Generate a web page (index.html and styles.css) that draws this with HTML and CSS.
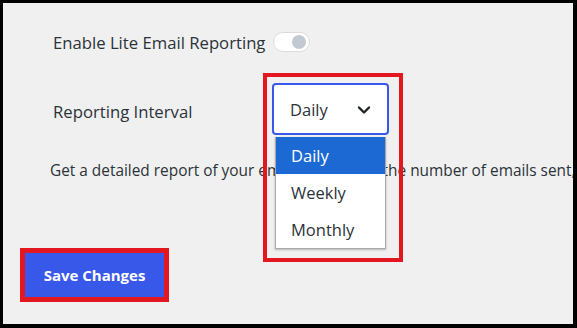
FILE: index.html
```html
<!DOCTYPE html>
<html lang="en">
<head>
    <meta charset="UTF-8">
    <meta name="viewport" content="width=device-width, initial-scale=1.0">
    <title>Email Reporting Settings</title>
    <link rel="stylesheet" href="styles.css">
</head>
<body>
    <div class="frame">
        <!-- Lite reporting toggle -->
        <div class="row-toggle">
            <span class="label-text">Enable Lite Email Reporting</span>
            <span class="toggle"><span class="knob"></span></span>
        </div>

        <!-- Interval select, shown open -->
        <div class="row-interval">
            <span class="interval-label">Reporting Interval</span>
            <div class="select-wrap">
                <div class="select-box">
                    <span>Daily</span>
                    <svg class="chevron" width="14" height="10" viewBox="0 0 14 10">
                        <path d="M2 2.5 L7 7.5 L12 2.5" fill="none" stroke="#1d2327" stroke-width="2.4" stroke-linecap="round" stroke-linejoin="round"/>
                    </svg>
                </div>
                <div class="highlight-box"></div>
                <ul class="options">
                    <li class="selected">Daily</li>
                    <li>Weekly</li>
                    <li>Monthly</li>
                </ul>
            </div>
        </div>

        <p class="description">Get a detailed report of your email usage with the number of emails sent, failed, and opened.</p>

        <div class="save-wrap">
            <button class="save-btn">Save Changes</button>
        </div>
    </div>
</body>
</html>
```

FILE: styles.css
```css
/* Settings panel screenshot */
html, body {
    margin: 0;
    padding: 0;
}

body {
    font-family: "Open Sans", "Noto Sans", sans-serif;
    color: #2c3338;
}

.frame {
    box-sizing: border-box;
    width: 577px;
    height: 328px;
    border: 3px solid #000;
    border-right-width: 4px;
    border-bottom-width: 4px;
    background-color: #f0f0f1;
    overflow: hidden;
}

.row-toggle {
    display: flex;
    align-items: center;
    gap: 8px;
    height: 20px;
    margin: 29px 0 0 50px;
    font-size: 16.7px;
}

.toggle {
    position: relative;
    box-sizing: border-box;
    width: 37px;
    height: 20px;
    background-color: #fff;
    border: 1px solid #dcdcde;
    border-radius: 10px;
}

.knob {
    position: absolute;
    top: 2px;
    right: 3px;
    width: 14px;
    height: 14px;
    border-radius: 50%;
    background-color: #c3c9d3;
}

.row-interval {
    display: flex;
    align-items: center;
    margin: 31px 0 0 50px;
    font-size: 16.7px;
}

.interval-label {
    width: 219px;
    margin-top: 4px;
}

.select-wrap {
    position: relative;
}

.select-box {
    box-sizing: border-box;
    display: flex;
    align-items: center;
    justify-content: space-between;
    width: 117px;
    height: 52px;
    padding: 0 16px 0 16px;
    background-color: #fff;
    border: 2px solid #3858e9;
    border-radius: 4px;
    font-size: 16.5px;
}

.chevron {
    margin-top: 2px;
}

.highlight-box {
    position: absolute;
    left: -9px;
    top: -10px;
    width: 132px;
    height: 181px;
    border: 4px solid #e3171f;
}

.options {
    position: absolute;
    left: 3px;
    top: 54px;
    box-sizing: border-box;
    width: 111px;
    margin: 0;
    padding: 0;
    list-style: none;
    background-color: #fff;
    border: 1px solid #a7aaad;
    border-top: none;
    box-shadow: 0 1px 2px rgba(0, 0, 0, 0.25);
    font-size: 16.5px;
}

.options li {
    height: 37px;
    line-height: 37px;
    padding-left: 15px;
}

.options li.selected {
    background-color: #1c69d4;
    color: #fff;
}

.description {
    margin: 25px 0 0 47px;
    font-size: 15.4px;
    white-space: nowrap;
}

.save-wrap {
    display: inline-block;
    margin: 67px 0 0 17px;
    border: 5px solid #e3171f;
}

.save-btn {
    display: block;
    width: 139px;
    height: 44px;
    border: none;
    background-color: #3858e9;
    color: #fff;
    font-family: "Open Sans", "Noto Sans", sans-serif;
    font-size: 15px;
    font-weight: 700;
}
```
